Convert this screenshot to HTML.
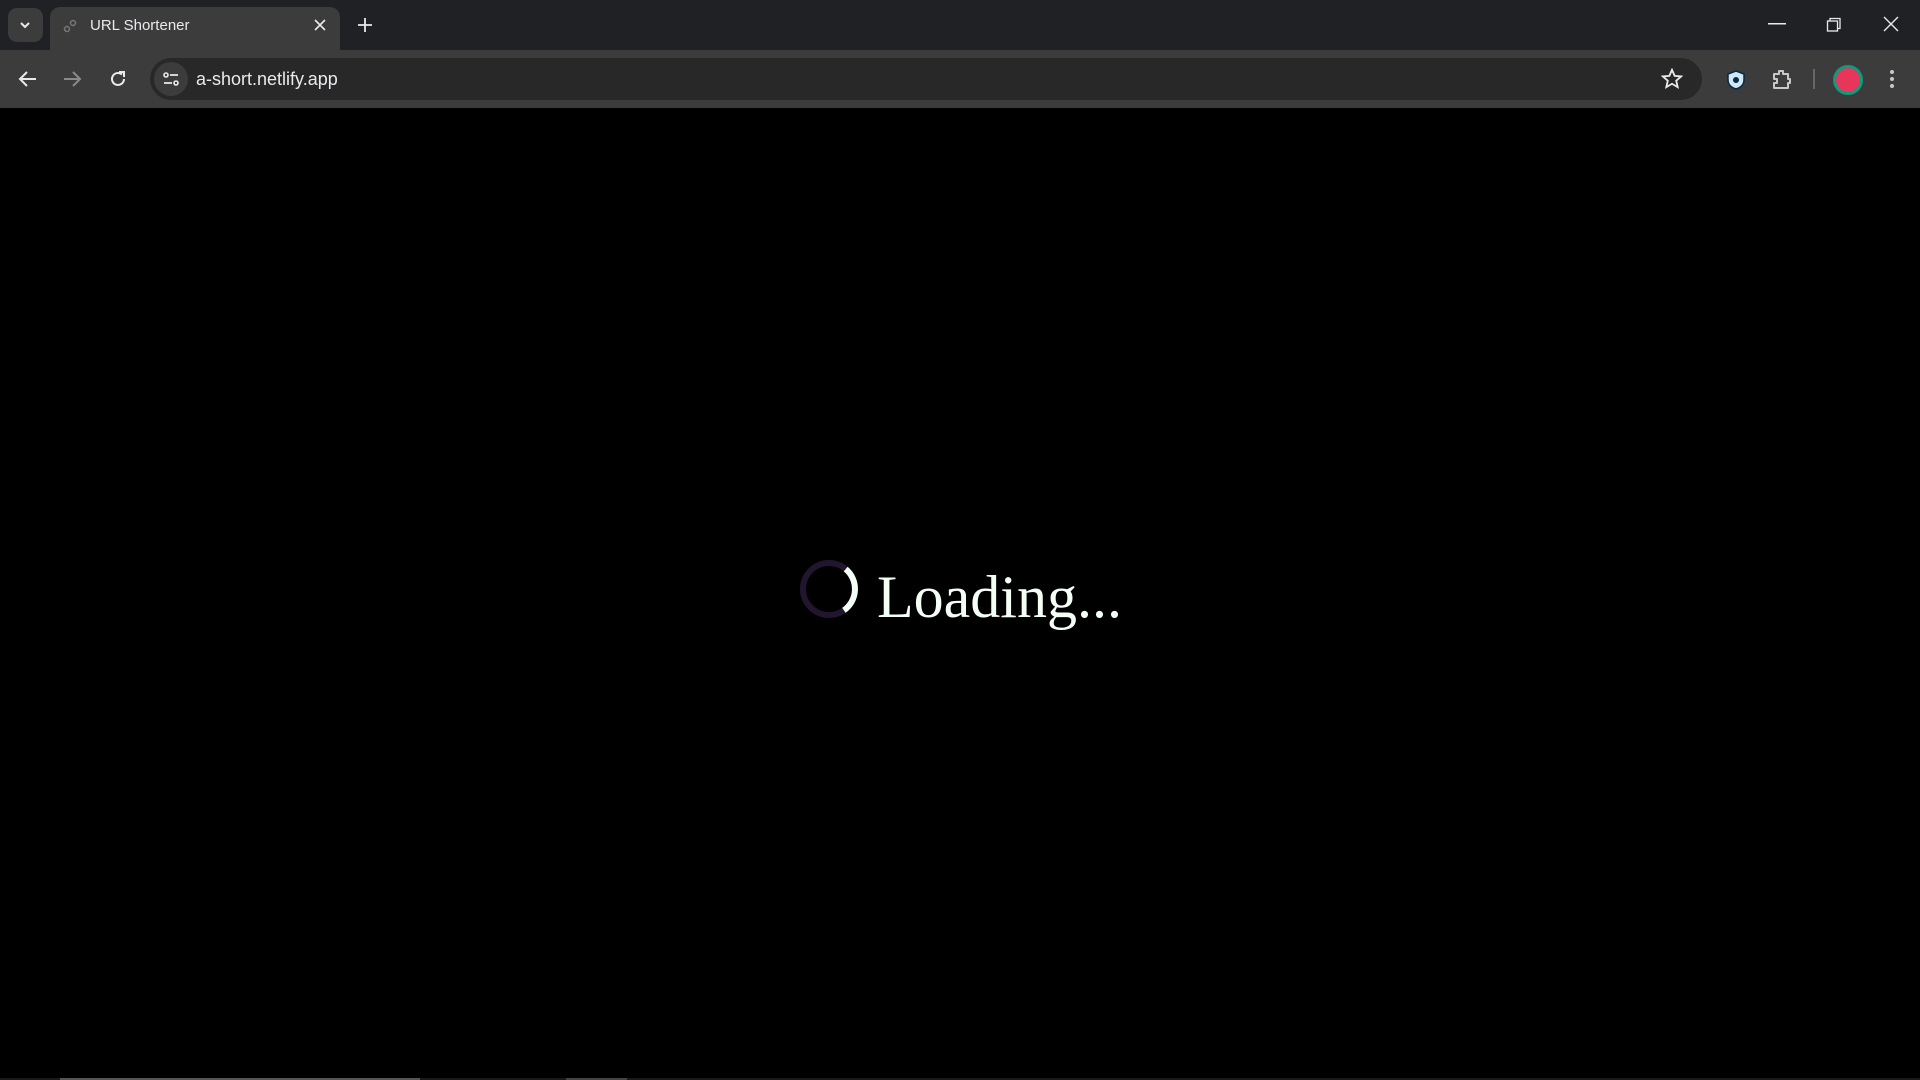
<!DOCTYPE html>
<html><head><style>
body{margin:0;width:1920px;height:1080px;background:#000;overflow:hidden;font-family:"Liberation Sans",sans-serif;position:relative}
.tabbar{position:absolute;left:0;top:0;width:1920px;height:50px;background:#202124}
.toolbar{position:absolute;left:0;top:50px;width:1920px;height:58px;background:#3c3c3c}
.tab{position:absolute;left:50px;top:7px;width:290px;height:43px;background:#3c3c3c;border-radius:10px 10px 0 0}
.dd{position:absolute;left:8px;top:8px;width:35px;height:34px;background:#3c3c3c;border-radius:9px}
.omni{position:absolute;left:150px;top:58px;width:1552px;height:42px;background:#282828;border-radius:21px}
.t{position:absolute;color:#e8eaed}
svg{position:absolute}
</style></head><body>
<div class="tabbar"></div>
<div class="dd"></div>
<svg style="left:18px;top:18px" width="14" height="14" viewBox="0 0 14 14"><path d="M3 5l4 4 4-4" stroke="#e8eaed" stroke-width="2" fill="none"/></svg>
<div class="tab"></div>
<svg style="left:63px;top:19px" width="14" height="14" viewBox="0 0 14 14"><circle cx="4" cy="10" r="2.5" stroke="#777" stroke-width="1.5" fill="none"/><circle cx="10" cy="4" r="2.5" stroke="#777" stroke-width="1.5" fill="none"/></svg>
<div class="t" style="left:90px;top:17px;font-size:15px">URL Shortener</div>
<svg style="left:313px;top:18px" width="14" height="14" viewBox="0 0 14 14"><path d="M2 2l10 10M12 2L2 12" stroke="#e8eaed" stroke-width="1.6"/></svg>
<svg style="left:357px;top:17px" width="16" height="16" viewBox="0 0 16 16"><path d="M8 1v14M1 8h14" stroke="#e8eaed" stroke-width="1.8"/></svg>
<svg style="left:1768px;top:23px" width="18" height="2"><rect width="18" height="1.5" fill="#e8eaed"/></svg>
<svg style="left:1826px;top:17px" width="16" height="16" viewBox="0 0 16 16"><rect x="1.5" y="4" width="10" height="10" stroke="#e8eaed" fill="none" stroke-width="1.3"/><path d="M4 4V1.5h10v10H11.5" stroke="#e8eaed" fill="none" stroke-width="1.3"/></svg>
<svg style="left:1882px;top:15px" width="18" height="18" viewBox="0 0 18 18"><path d="M2 2l14 14M16 2L2 16" stroke="#e8eaed" stroke-width="1.4"/></svg>
<div class="toolbar"></div>
<svg style="left:18px;top:70px" width="20" height="18" viewBox="0 0 20 18"><path d="M18 9H3M9 2L2 9l7 7" stroke="#e8eaed" stroke-width="2" fill="none"/></svg>
<svg style="left:62px;top:70px" width="20" height="18" viewBox="0 0 20 18"><path d="M2 9h15M11 2l7 7-7 7" stroke="#8a8a8a" stroke-width="2" fill="none"/></svg>
<svg style="left:108px;top:69px" width="20" height="20" viewBox="0 0 20 20"><path d="M16 10a6 6 0 1 1-2-4.5" stroke="#e8eaed" stroke-width="2" fill="none"/><path d="M11 3h5v5" stroke="#e8eaed" stroke-width="2" fill="none"/></svg>
<div class="omni"></div>
<div style="position:absolute;left:154px;top:62px;width:34px;height:34px;border-radius:17px;background:#3c3c3c"></div>
<svg style="left:162px;top:70px" width="18" height="18" viewBox="0 0 18 18"><circle cx="4" cy="5" r="2" stroke="#e8eaed" stroke-width="1.6" fill="none"/><path d="M8 5h8M2 13h8" stroke="#e8eaed" stroke-width="1.8"/><circle cx="14" cy="13" r="2" stroke="#e8eaed" stroke-width="1.6" fill="none"/></svg>
<div class="t" style="left:196px;top:69px;font-size:18px">a-short.netlify.app</div>
<svg style="left:1661px;top:68px" width="22" height="22" viewBox="0 0 24 24"><path d="M12 2l2.9 6.6 7.1.6-5.4 4.7 1.6 7L12 17.2 5.8 20.9l1.6-7L2 9.2l7.1-.6z" stroke="#e8eaed" stroke-width="2" fill="none"/></svg>
<svg style="left:1727px;top:70px" width="18" height="20" viewBox="0 0 18 20"><path d="M9 1l8 3v6c0 5-4 8-8 9-4-1-8-4-8-9V4z" fill="#cfe8f7" stroke="#0b2840" stroke-width="1.5"/><circle cx="9" cy="10" r="3" fill="#0b2840"/></svg>
<svg style="left:1771px;top:68px" width="22" height="22" viewBox="0 0 22 22"><path d="M3 6h5V3h4v3h5v5h2v4h-2v5H3v-5h3v-4H3z" stroke="#c8c8c8" stroke-width="2" fill="none" stroke-linejoin="round"/></svg>
<div style="position:absolute;left:1813px;top:69px;width:2px;height:20px;background:#666"></div>
<div style="position:absolute;left:1833px;top:65px;width:24px;height:24px;border-radius:50%;background:#e8355a;border:3px solid #0e9b7d"></div>
<svg style="left:1889px;top:69px" width="6" height="20"><circle cx="3" cy="3" r="2" fill="#c8c8c8"/><circle cx="3" cy="10" r="2" fill="#c8c8c8"/><circle cx="3" cy="17" r="2" fill="#c8c8c8"/></svg>
<svg style="left:794px;top:554px" width="70" height="70" viewBox="0 0 70 70"><circle cx="35" cy="35" r="26" stroke="#21162e" stroke-width="6" fill="none"/><path d="M51.7 15.1A26 26 0 0 1 49.9 56.3" stroke="#f4fff6" stroke-width="6" fill="none"/></svg>
<div style="position:absolute;left:877px;top:557px;font-family:'Liberation Serif',serif;font-size:60px;color:#f4fff6;line-height:80px">Loading...</div>
<div style="position:absolute;left:0;top:1078px;width:1920px;height:2px;background:#1a1a1a"></div>
<div style="position:absolute;left:60px;top:1078px;width:360px;height:2px;background:#555"></div>
<div style="position:absolute;left:566px;top:1078px;width:61px;height:2px;background:#444"></div>
</body></html>
